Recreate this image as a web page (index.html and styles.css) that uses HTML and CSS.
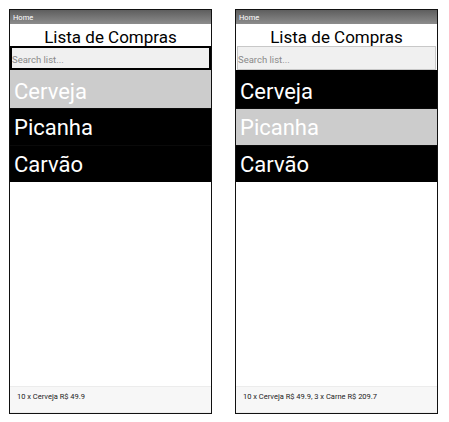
FILE: index.html
```html
<!DOCTYPE html>
<html>
<head>
<meta charset="utf-8">
<link rel="stylesheet" href="styles.css">
</head>
<body>
<div class="screens">
  <div class="phone">
    <div class="titlebar">Home</div>
    <div class="header">Lista de Compras</div>
    <div class="search focused"><span class="placeholder">Search list...</span></div>
    <div class="list">
      <div class="item selected">Cerveja</div>
      <div class="item">Picanha</div>
      <div class="item">Carvão</div>
    </div>
    <div class="footer">10 x Cerveja R$ 49.9</div>
  </div>
  <div class="phone">
    <div class="titlebar">Home</div>
    <div class="header">Lista de Compras</div>
    <div class="search"><span class="placeholder">Search list...</span></div>
    <div class="list">
      <div class="item">Cerveja</div>
      <div class="item selected">Picanha</div>
      <div class="item">Carvão</div>
    </div>
    <div class="footer">10 x Cerveja R$ 49.9, 3 x Carne R$ 209.7</div>
  </div>
</div>
</body>
</html>
```

FILE: styles.css
```css
html, body {
  margin: 0;
  padding: 0;
  background: #ffffff;
  font-family: Roboto, "Liberation Sans", sans-serif;
}

.screens {
  display: flex;
  gap: 23px;
  padding: 9px 0 0 9px;
}

.phone {
  width: 201px;
  height: 403px;
  border: 1px solid #111;
  display: flex;
  flex-direction: column;
  background: #fff;
}

.titlebar {
  height: 14px;
  background: linear-gradient(#5e5e5e, #8c8c8c);
  color: #fff;
  font-size: 7.5px;
  line-height: 16px;
  padding-left: 3px;
}

.header {
  height: 22px;
  line-height: 27px;
  text-align: center;
  font-size: 17px;
  color: #000;
}

.search {
  height: 24px;
  box-sizing: border-box;
  background: #f0f0f0;
  border: 1px solid #c8c8c8;
  margin: 0 1px;
  display: flex;
  align-items: center;
  padding-top: 3px;
}

.search.focused {
  border: 2px solid #000;
  margin: 0;
}

.placeholder {
  font-size: 9.5px;
  color: #8a8a8a;
}

.list {
  flex: 1;
  display: flex;
  flex-direction: column;
}

.item {
  height: 37px;
  background: #000;
  color: #fff;
  font-size: 22px;
  line-height: 38px;
  padding-left: 4px;
  border-top: 1px solid #0a0a0a;
  box-sizing: border-box;
}

.item:first-child {
  height: 38px;
  line-height: 44px;
  border-top: none;
}

.item.selected {
  background: #cccccc;
}

.footer {
  height: 27px;
  box-sizing: border-box;
  background: #f7f7f7;
  border-top: 1px solid #ececec;
  border-bottom: 1px solid #ececec;
  font-size: 7.5px;
  color: #222;
  line-height: 20px;
  padding-left: 7px;
}
```
